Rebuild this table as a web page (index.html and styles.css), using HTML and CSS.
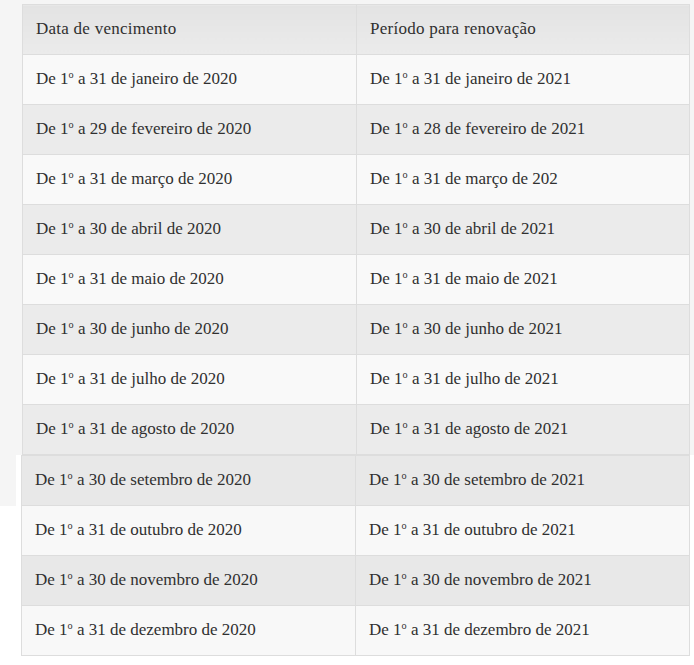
FILE: index.html
```html
<!DOCTYPE html>
<html lang="pt">
<head>
<meta charset="utf-8">
<link rel="stylesheet" href="styles.css">
</head>
<body>
<div class="page">
  <section class="shot shot-top">
    <table class="tbl">
      <thead>
        <tr><th>Data de vencimento</th><th>Período para renovação</th></tr>
      </thead>
      <tbody>
        <tr><td>De 1<sup>o</sup> a 31 de janeiro de 2020</td><td>De 1<sup>o</sup> a 31 de janeiro de 2021</td></tr>
        <tr><td>De 1<sup>o</sup> a 29 de fevereiro de 2020</td><td>De 1<sup>o</sup> a 28 de fevereiro de 2021</td></tr>
        <tr><td>De 1<sup>o</sup> a 31 de março de 2020</td><td>De 1<sup>o</sup> a 31 de março de 202</td></tr>
        <tr><td>De 1<sup>o</sup> a 30 de abril de 2020</td><td>De 1<sup>o</sup> a 30 de abril de 2021</td></tr>
        <tr><td>De 1<sup>o</sup> a 31 de maio de 2020</td><td>De 1<sup>o</sup> a 31 de maio de 2021</td></tr>
        <tr><td>De 1<sup>o</sup> a 30 de junho de 2020</td><td>De 1<sup>o</sup> a 30 de junho de 2021</td></tr>
        <tr><td>De 1<sup>o</sup> a 31 de julho de 2020</td><td>De 1<sup>o</sup> a 31 de julho de 2021</td></tr>
        <tr><td>De 1<sup>o</sup> a 31 de agosto de 2020</td><td>De 1<sup>o</sup> a 31 de agosto de 2021</td></tr>
      </tbody>
    </table>
  </section>
  <section class="shot shot-bottom">
    <div class="gutter"></div>
    <table class="tbl tbl-b">
      <tbody>
        <tr class="alt"><td>De 1<sup>o</sup> a 30 de setembro de 2020</td><td>De 1<sup>o</sup> a 30 de setembro de 2021</td></tr>
        <tr><td>De 1<sup>o</sup> a 31 de outubro de 2020</td><td>De 1<sup>o</sup> a 31 de outubro de 2021</td></tr>
        <tr class="alt"><td>De 1<sup>o</sup> a 30 de novembro de 2020</td><td>De 1<sup>o</sup> a 30 de novembro de 2021</td></tr>
        <tr><td>De 1<sup>o</sup> a 31 de dezembro de 2020</td><td>De 1<sup>o</sup> a 31 de dezembro de 2021</td></tr>
      </tbody>
    </table>
  </section>
</div>
</body>
</html>
```

FILE: styles.css
```css
html, body {
  margin: 0;
  padding: 0;
  background: #ffffff;
}
.page {
  width: 694px;
  height: 665px;
  overflow: hidden;
}
.shot-top {
  background: #f5f5f5;
  padding: 4px 0 0 22px;
}
.shot-bottom {
  display: flex;
  gap: 5px;
}
.gutter {
  width: 16px;
  height: 51px;
  background: #f5f5f5;
  flex: none;
}
.tbl {
  border-collapse: collapse;
  width: 668px;
  table-layout: fixed;
  font-family: "Liberation Serif", "Times New Roman", serif;
  font-size: 17px;
  letter-spacing: 0;
  color: #303030;
}
.tbl th, .tbl td {
  height: 50px;
  padding: 0 0 2px 13px;
  text-align: left;
  font-weight: normal;
  box-sizing: border-box;
  border: 1px solid #dddddd;
  vertical-align: middle;
}
.tbl th {
  letter-spacing: 0.25px;
}
.tbl th:first-child, .tbl td:first-child {
  width: 334px;
}
.tbl thead th {
  background: linear-gradient(#e3e3e3, #ebebeb);
}
.tbl tbody tr:nth-child(odd) td {
  background: #f9f9f9;
}
.tbl tbody tr:nth-child(even) td {
  background: #ebebeb;
}
.tbl-b tbody tr.alt td {
  background: #e8e8e8;
}
.tbl-b tbody tr:not(.alt) td {
  background: #f8f8f8;
}
.tbl-b {
  width: 669px;
}
sup {
  font-size: 0.6em;
  line-height: 0;
  vertical-align: 0.55em;
}
```
